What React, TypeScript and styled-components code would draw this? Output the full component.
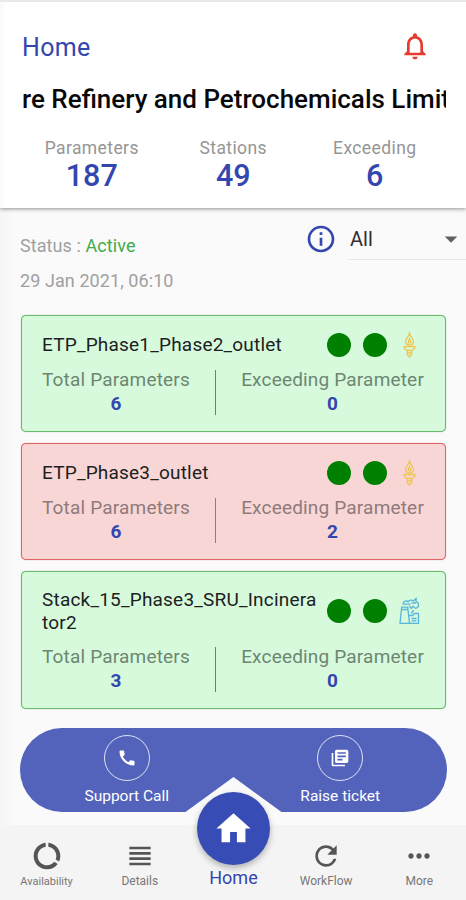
import React from "react";
import styled, { createGlobalStyle } from "styled-components";
import {
  MdArrowDropDown,
  MdCall,
  MdDataUsage,
  MdHome,
  MdInfoOutline,
  MdLibraryBooks,
  MdMoreHoriz,
  MdNotificationsNone,
  MdRefresh,
  MdViewHeadline,
} from "react-icons/md";

const GlobalStyle = createGlobalStyle`
  *, *::before, *::after { box-sizing: border-box; }
  body {
    margin: 0;
    background: #fafafa;
    font-family: Roboto, "Liberation Sans", sans-serif;
  }
  svg { display: block; flex: none; }
`;

const indigo = "#3346ae";

const Screen = styled.div`
  display: flex;
  flex-direction: column;
  width: 466px;
  height: 900px;
  overflow: hidden;
  background: linear-gradient(90deg, #f6f6f6 0, #f8f8f8 8px, #fafafa 12px);
`;

const Header = styled.header`
  flex: none;
  height: 208px;
  padding: 0 20px 0 22px;
  border-top: 2px solid #e9e9e9;
  background: linear-gradient(90deg, #f9f9f9 0, #fff 6px);
  box-shadow: 0 1px 4px rgba(0, 0, 0, 0.42);
`;

const TitleBar = styled.div`
  display: flex;
  align-items: center;
  justify-content: space-between;
  height: 66px;
  padding: 22px 15px 0 0;
`;

const PageTitle = styled.h1`
  margin: 3px 0 0;
  font-size: 25px;
  font-weight: 400;
  line-height: 30px;
  letter-spacing: 0.3px;
  color: ${indigo};
`;

const Marquee = styled.div`
  height: 34px;
  margin-top: 14px;
  overflow: hidden;
  white-space: nowrap;
  font-size: 26px;
  font-weight: 500;
  line-height: 34px;
  color: #080808;
`;

const Totals = styled.div`
  display: grid;
  grid-template-columns: repeat(3, 141.5px);
  margin: 21px 0 0 -1px;
`;

const Total = styled.div`
  display: flex;
  flex-direction: column;
  align-items: center;
`;

const TotalLabel = styled.span`
  font-size: 17.5px;
  line-height: 22px;
  letter-spacing: 0.4px;
  color: #959595;
`;

const TotalValue = styled.span`
  font-size: 30.5px;
  font-weight: 500;
  line-height: 34px;
  color: ${indigo};
`;

const FilterBar = styled.section`
  display: flex;
  flex: none;
  justify-content: space-between;
  height: 107px;
  padding-left: 20px;
`;

const StatusBlock = styled.div`
  padding-top: 20px;
  font-size: 18px;
  line-height: 35px;
  letter-spacing: 0.08px;
  color: #a0a0a0;
`;

const Active = styled.span`
  color: #41ab48;
`;

const Filters = styled.div`
  display: flex;
  gap: 12px;
  padding-top: 10px;
`;

const InfoButton = styled.div`
  height: 32px;
  padding-top: 5px;
  color: ${indigo};
`;

const Select = styled.div`
  display: flex;
  align-items: center;
  justify-content: space-between;
  width: 117px;
  height: 42px;
  padding: 1px 0 0 1px;
  border-bottom: 1px solid #e6e6e6;
  font-size: 20px;
  color: #303030;
`;

const Stations = styled.main`
  display: flex;
  flex: none;
  flex-direction: column;
  gap: 11px;
  width: 425px;
  margin-left: 21px;
`;

const Card = styled.article<{ $alert?: boolean }>`
  padding: 16px 20px;
  border: 1px solid ${(p) => (p.$alert ? "#df6468" : "#66ba69")};
  border-radius: 5px;
  background: ${(p) => (p.$alert ? "#f9d6d6" : "#d7fadd")};
  box-shadow: 0 0 1px ${(p) => (p.$alert ? "#df6468" : "#66ba69")};
`;

const StationRow = styled.div`
  display: flex;
  align-items: center;
  min-height: 25px;
`;

const StationName = styled.div`
  width: 277px;
  margin-right: 8px;
  font-size: 19px;
  line-height: 23px;
  letter-spacing: 0.2px;
  word-break: break-all;
  color: #1c211d;
`;

const Indicators = styled.div`
  display: flex;
  align-items: center;
  gap: 12px;
  height: 25px;
`;

const Dot = styled.span`
  width: 24px;
  height: 24px;
  border-radius: 50%;
  background: #008000;
`;

const Metrics = styled.div`
  display: flex;
  align-items: center;
  justify-content: space-between;
  height: 58px;
  padding: 12px 1px 0 0;
`;

const Metric = styled.div`
  display: flex;
  flex-direction: column;
  align-items: center;
  font-size: 19px;
  line-height: 24px;
`;

const MetricLabel = styled.span<{ $alert?: boolean }>`
  white-space: nowrap;
  letter-spacing: 0.18px;
  color: ${(p) => (p.$alert ? "#8e7a7b" : "#6d8671")};
`;

const MetricValue = styled.span`
  font-weight: 700;
  color: ${indigo};
`;

const Divider = styled.span<{ $alert?: boolean }>`
  width: 1px;
  height: 45px;
  background: ${(p) => (p.$alert ? "#947a7b" : "#67846b")};
`;

const ActionPill = styled.section`
  display: grid;
  flex: none;
  grid-template-columns: 1fr 1fr;
  width: 427px;
  height: 84px;
  margin: 19px 0 0 20px;
  border-radius: 42px;
  background: #5363bb;
  clip-path: polygon(0 0, 100% 0, 100% 100%, 261.5px 100%, 213.5px 49px, 165.5px 100%, 0 100%);
`;

const Action = styled.div`
  display: flex;
  flex-direction: column;
  align-items: center;
  padding-top: 7px;
  font-size: 15.5px;
  line-height: 20px;
  color: #fff;
`;

const ActionIcon = styled.div`
  display: flex;
  align-items: center;
  justify-content: center;
  width: 46px;
  height: 46px;
  margin-bottom: 5px;
  border: 1px solid #dfe2f3;
  border-radius: 50%;
`;

const Nav = styled.nav`
  display: grid;
  grid-template-columns: repeat(5, 93.2px);
  flex: none;
  height: 75px;
  margin-top: auto;
  background: #f4f4f4;
`;

const NavItem = styled.div<{ $small?: boolean }>`
  display: flex;
  flex-direction: column;
  align-items: center;
  padding-top: 15px;
  font-size: ${(p) => (p.$small ? "11px" : "12px")};
  line-height: ${(p) => (p.$small ? "19px" : "18px")};
  color: #777;

  svg {
    color: #555;
  }
`;

const NavHome = styled.div`
  display: flex;
  flex-direction: column;
  align-items: center;
  margin: -33px 0 0 1px;
  font-size: 18px;
  line-height: 24px;
  color: ${indigo};
`;

const HomeButton = styled.div`
  display: flex;
  flex: none;
  align-items: center;
  justify-content: center;
  width: 73px;
  height: 73px;
  margin-bottom: 1px;
  border-radius: 50%;
  background: #384cb5;
  color: #fff;
  box-shadow: 0 3px 6px rgba(0, 0, 0, 0.28);
`;

const OutletIcon = () => (
  <svg width="21" height="28" viewBox="0 0 21 28" fill="none" stroke="#eec550" strokeWidth="1.3" strokeLinejoin="round">
    <path d="M10.5 1.500c.5 3.500-4 5.500-4 9.200 0 1.800 1.500 3 4 3.500 2.500-.5 4-1.700 4-3.500 0-3.700-4.500-5.700-4-9.200z" />
    <path d="M10.500 7.500c0 1.800-1.300 2-1.300 3.500s2.600 1.500 2.600 0-1.300-1.700-1.300-3.500z" />
    <path d="M5.200 15.500h10.600v1.700l-2.800 2.300H8l-2.800-2.300zM8.300 19.500v4l2.200 2.500 2.200-2.500v-4M8.300 22h4.400" />
  </svg>
);

const StackIcon = () => (
  <svg width="21" height="28" viewBox="0 0 21 28" fill="none" stroke="#59b5dc" strokeWidth="1.3" strokeLinejoin="round" strokeLinecap="round">
    <path d="M1 26.400h18.500V16.500h-4.200l-1.600 2h-3.200M1 26.400l1.700-16.300h6l1.800 16.300M3.500 12.500h5" />
    <path d="M4 7c.4-3 3.700-3.700 5.300-2.300C10.500 2.700 13 2.700 14.300 4l3-2.800-.4 3.500c3.800 1 3.300 6.300-.4 6.600l-2.700-2-1.500 2.200-2-2.400M5 7.200h6" />
    <path d="M13 6h3.500M12.500 16l2-2.500M13 21.500h4M13 23.800h4" />
  </svg>
);

type StationProps = {
  name: string;
  total: number;
  exceeding: number;
  kind: "outlet" | "stack";
};

const Station = ({ name, total, exceeding, kind }: StationProps) => {
  const alert = exceeding > 0;
  return (
    <Card $alert={alert}>
      <StationRow>
        <StationName>{name}</StationName>
        <Indicators>
          <Dot />
          <Dot />
          {kind === "outlet" ? <OutletIcon /> : <StackIcon />}
        </Indicators>
      </StationRow>
      <Metrics>
        <Metric>
          <MetricLabel $alert={alert}>Total Parameters</MetricLabel>
          <MetricValue>{total}</MetricValue>
        </Metric>
        <Divider $alert={alert} />
        <Metric>
          <MetricLabel $alert={alert}>Exceeding Parameter</MetricLabel>
          <MetricValue>{exceeding}</MetricValue>
        </Metric>
      </Metrics>
    </Card>
  );
};

const totals = [
  { label: "Parameters", value: 187 },
  { label: "Stations", value: 49 },
  { label: "Exceeding", value: 6 },
];

const stations: StationProps[] = [
  { name: "ETP_Phase1_Phase2_outlet", total: 6, exceeding: 0, kind: "outlet" },
  { name: "ETP_Phase3_outlet", total: 6, exceeding: 2, kind: "outlet" },
  { name: "Stack_15_Phase3_SRU_Incinerator2", total: 3, exceeding: 0, kind: "stack" },
];

export default function App() {
  return (
    <Screen>
      <GlobalStyle />
      <Header>
        <TitleBar>
          <PageTitle>Home</PageTitle>
          <MdNotificationsNone size={32} color="#e53b2f" />
        </TitleBar>
        <Marquee>re Refinery and Petrochemicals Limit</Marquee>
        <Totals>
          {totals.map((t) => (
            <Total key={t.label}>
              <TotalLabel>{t.label}</TotalLabel>
              <TotalValue>{t.value}</TotalValue>
            </Total>
          ))}
        </Totals>
      </Header>
      <FilterBar>
        <StatusBlock>
          <div>
            Status : <Active>Active</Active>
          </div>
          <div>29 Jan 2021, 06:10</div>
        </StatusBlock>
        <Filters>
          <InfoButton>
            <MdInfoOutline size={32} />
          </InfoButton>
          <Select>
            All
            <MdArrowDropDown size={30} color="#606060" />
          </Select>
        </Filters>
      </FilterBar>
      <Stations>
        {stations.map((s) => (
          <Station key={s.name} {...s} />
        ))}
      </Stations>
      <ActionPill>
        <Action>
          <ActionIcon>
            <MdCall size={20} />
          </ActionIcon>
          Support Call
        </Action>
        <Action>
          <ActionIcon>
            <MdLibraryBooks size={20} />
          </ActionIcon>
          Raise ticket
        </Action>
      </ActionPill>
      <Nav>
        <NavItem $small>
          <MdDataUsage size={32} />
          Availability
        </NavItem>
        <NavItem>
          <MdViewHeadline size={32} />
          Details
        </NavItem>
        <NavHome>
          <HomeButton>
            <MdHome size={41} />
          </HomeButton>
          Home
        </NavHome>
        <NavItem>
          <MdRefresh size={32} />
          WorkFlow
        </NavItem>
        <NavItem>
          <MdMoreHoriz size={32} />
          More
        </NavItem>
      </Nav>
    </Screen>
  );
}
